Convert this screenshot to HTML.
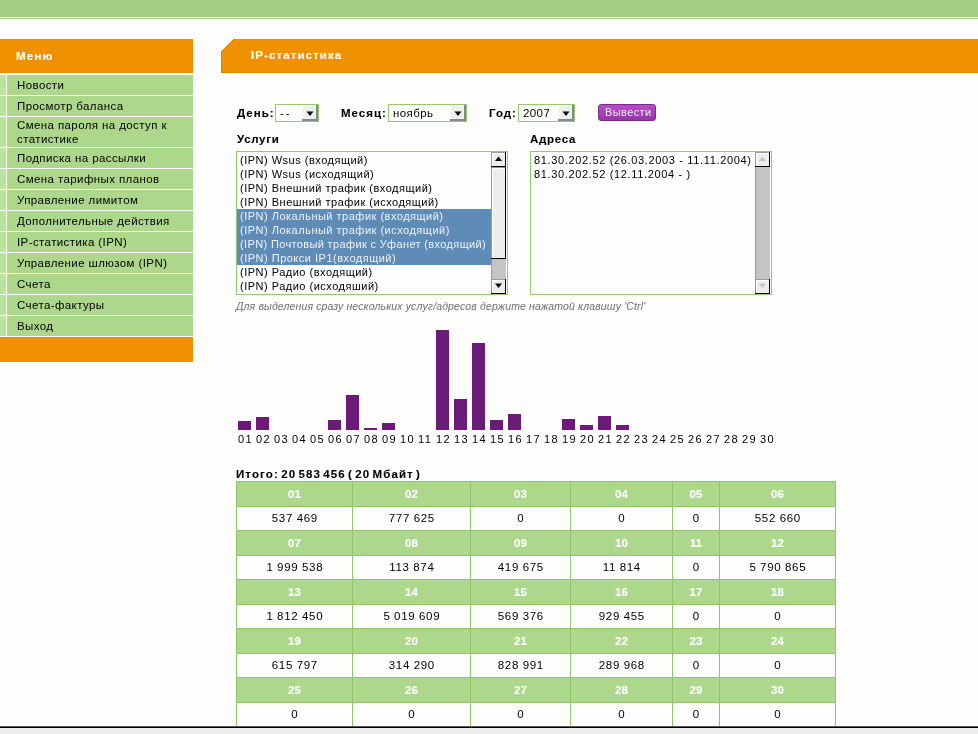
<!DOCTYPE html><html><head><meta charset="utf-8"><style>
*{margin:0;padding:0;box-sizing:border-box}
html,body{width:978px;height:734px;overflow:hidden;background:#fdfdfb;font-family:"Liberation Sans",sans-serif;color:#000}
div{position:absolute}
.t{white-space:nowrap;font-size:11px;line-height:14px;will-change:transform}
.b{font-weight:bold}
</style></head><body>
<div style="left:0;top:0;width:978px;height:17px;background:#a6ce84"></div>
<div style="left:0;top:17px;width:978px;height:1px;background:#fafcf6"></div>
<div style="left:0;top:18px;width:978px;height:1px;background:#a6ce84"></div>
<div style="left:0;top:39px;width:193px;height:34px;background:#f09200"></div>
<div style="left:0;top:72px;width:193px;height:1px;background:#ee8b00"></div>
<div style="left:192px;top:39px;width:1px;height:34px;background:#ee8b00"></div>
<div class="t b" style="left:16px;top:49px;color:#fff;font-size:11.5px;letter-spacing:1.2px;-webkit-text-stroke:0.15px #fff">Меню</div>
<div style="left:0;top:73px;width:193px;height:264px;background:#fff"></div>
<div style="left:0;top:75px;width:6px;height:20px;background:#b9e398"></div>
<div style="left:7px;top:75px;width:186px;height:20px;background:#add88c"></div>
<div class="t" style="left:17px;top:78px;letter-spacing:0.4px;line-height:14px;font-size:11.5px">Новости</div>
<div style="left:0;top:96px;width:6px;height:20px;background:#b9e398"></div>
<div style="left:7px;top:96px;width:186px;height:20px;background:#add88c"></div>
<div class="t" style="left:17px;top:99px;letter-spacing:0.4px;line-height:14px;font-size:11.5px">Просмотр баланса</div>
<div style="left:0;top:117px;width:6px;height:30px;background:#b9e398"></div>
<div style="left:7px;top:117px;width:186px;height:30px;background:#add88c"></div>
<div class="t" style="left:17px;top:118px;letter-spacing:0.4px;line-height:14px;font-size:11.5px">Смена пароля на доступ к<br>статистике</div>
<div style="left:0;top:148px;width:6px;height:20px;background:#b9e398"></div>
<div style="left:7px;top:148px;width:186px;height:20px;background:#add88c"></div>
<div class="t" style="left:17px;top:151px;letter-spacing:0.4px;line-height:14px;font-size:11.5px">Подписка на рассылки</div>
<div style="left:0;top:169px;width:6px;height:20px;background:#b9e398"></div>
<div style="left:7px;top:169px;width:186px;height:20px;background:#add88c"></div>
<div class="t" style="left:17px;top:172px;letter-spacing:0.4px;line-height:14px;font-size:11.5px">Смена тарифных планов</div>
<div style="left:0;top:190px;width:6px;height:20px;background:#b9e398"></div>
<div style="left:7px;top:190px;width:186px;height:20px;background:#add88c"></div>
<div class="t" style="left:17px;top:193px;letter-spacing:0.4px;line-height:14px;font-size:11.5px">Управление лимитом</div>
<div style="left:0;top:211px;width:6px;height:20px;background:#b9e398"></div>
<div style="left:7px;top:211px;width:186px;height:20px;background:#add88c"></div>
<div class="t" style="left:17px;top:214px;letter-spacing:0.4px;line-height:14px;font-size:11.5px">Дополнительные действия</div>
<div style="left:0;top:232px;width:6px;height:20px;background:#b9e398"></div>
<div style="left:7px;top:232px;width:186px;height:20px;background:#add88c"></div>
<div class="t" style="left:17px;top:235px;letter-spacing:0.4px;line-height:14px;font-size:11.5px">IP-статистика (IPN)</div>
<div style="left:0;top:253px;width:6px;height:20px;background:#b9e398"></div>
<div style="left:7px;top:253px;width:186px;height:20px;background:#add88c"></div>
<div class="t" style="left:17px;top:256px;letter-spacing:0.4px;line-height:14px;font-size:11.5px">Управление шлюзом (IPN)</div>
<div style="left:0;top:274px;width:6px;height:20px;background:#b9e398"></div>
<div style="left:7px;top:274px;width:186px;height:20px;background:#add88c"></div>
<div class="t" style="left:17px;top:277px;letter-spacing:0.4px;line-height:14px;font-size:11.5px">Счета</div>
<div style="left:0;top:295px;width:6px;height:20px;background:#b9e398"></div>
<div style="left:7px;top:295px;width:186px;height:20px;background:#add88c"></div>
<div class="t" style="left:17px;top:298px;letter-spacing:0.4px;line-height:14px;font-size:11.5px">Счета-фактуры</div>
<div style="left:0;top:316px;width:6px;height:20px;background:#b9e398"></div>
<div style="left:7px;top:316px;width:186px;height:20px;background:#add88c"></div>
<div class="t" style="left:17px;top:319px;letter-spacing:0.4px;line-height:14px;font-size:11.5px">Выход</div>
<div style="left:0;top:337px;width:193px;height:25px;background:#f09200"></div>
<svg style="position:absolute;left:221px;top:39px" width="757" height="34" shape-rendering="crispEdges"><rect x="1" y="12" width="756" height="1" fill="#f09200"/><rect x="0" y="12" width="1" height="1" fill="#cf8509"/><rect x="2" y="11" width="755" height="1" fill="#f09200"/><rect x="1" y="11" width="1" height="1" fill="#cf8509"/><rect x="3" y="10" width="754" height="1" fill="#f09200"/><rect x="2" y="10" width="1" height="1" fill="#cf8509"/><rect x="4" y="9" width="753" height="1" fill="#f09200"/><rect x="3" y="9" width="1" height="1" fill="#cf8509"/><rect x="5" y="8" width="752" height="1" fill="#f09200"/><rect x="4" y="8" width="1" height="1" fill="#cf8509"/><rect x="6" y="7" width="751" height="1" fill="#f09200"/><rect x="5" y="7" width="1" height="1" fill="#cf8509"/><rect x="7" y="6" width="750" height="1" fill="#f09200"/><rect x="6" y="6" width="1" height="1" fill="#cf8509"/><rect x="8" y="5" width="749" height="1" fill="#f09200"/><rect x="7" y="5" width="1" height="1" fill="#cf8509"/><rect x="9" y="4" width="748" height="1" fill="#f09200"/><rect x="8" y="4" width="1" height="1" fill="#cf8509"/><rect x="10" y="3" width="747" height="1" fill="#f09200"/><rect x="9" y="3" width="1" height="1" fill="#cf8509"/><rect x="11" y="2" width="746" height="1" fill="#f09200"/><rect x="10" y="2" width="1" height="1" fill="#cf8509"/><rect x="12" y="1" width="745" height="1" fill="#f09200"/><rect x="11" y="1" width="1" height="1" fill="#cf8509"/><rect x="13" y="0" width="744" height="1" fill="#f09200"/><rect x="12" y="0" width="1" height="1" fill="#cf8509"/><rect x="1" y="13" width="756" height="20" fill="#f09200"/><rect x="0" y="13" width="1" height="21" fill="#d8870a"/><rect x="1" y="33" width="756" height="1" fill="#e98300"/></svg>
<div class="t b" style="left:251px;top:48px;color:#fff;font-size:11.5px;letter-spacing:1.1px;-webkit-text-stroke:0.15px #fff">IP-статистика</div>
<div class="t b" style="left:237px;top:106px;font-size:11.5px;letter-spacing:1.0px;-webkit-text-stroke:0.1px #000;">День:</div>
<div class="t b" style="left:341px;top:106px;font-size:11.5px;letter-spacing:1.0px;-webkit-text-stroke:0.1px #000;">Месяц:</div>
<div class="t b" style="left:489px;top:106px;font-size:11.5px;letter-spacing:1.0px;-webkit-text-stroke:0.1px #000;">Год:</div>
<div style="left:275px;top:104px;width:44px;height:18px;border:1px solid #94c872;background:#fdfdfb"></div>
<div class="t" style="left:280px;top:106px;font-size:11.5px;letter-spacing:2px">--</div>
<div style="left:302px;top:105px;width:16px;height:16px;background:#888"></div>
<div style="left:302px;top:105px;width:14px;height:14px;background:#fff"></div>
<div style="left:303px;top:106px;width:13px;height:13px;background:#eceeeb"></div>
<svg style="position:absolute;left:306px;top:111px" width="8" height="6"><polygon points="0.5,0.5 7.5,0.5 4,5" fill="#000"/></svg>
<div style="left:388px;top:104px;width:79px;height:18px;border:1px solid #94c872;background:#fdfdfb"></div>
<div class="t" style="left:393px;top:106px;font-size:11.5px;letter-spacing:0.4px">ноябрь</div>
<div style="left:450px;top:105px;width:16px;height:16px;background:#888"></div>
<div style="left:450px;top:105px;width:14px;height:14px;background:#fff"></div>
<div style="left:451px;top:106px;width:13px;height:13px;background:#eceeeb"></div>
<svg style="position:absolute;left:454px;top:111px" width="8" height="6"><polygon points="0.5,0.5 7.5,0.5 4,5" fill="#000"/></svg>
<div style="left:518px;top:104px;width:57px;height:18px;border:1px solid #94c872;background:#fdfdfb"></div>
<div class="t" style="left:523px;top:106px;font-size:11.5px;letter-spacing:0.4px">2007</div>
<div style="left:558px;top:105px;width:16px;height:16px;background:#888"></div>
<div style="left:558px;top:105px;width:14px;height:14px;background:#fff"></div>
<div style="left:559px;top:106px;width:13px;height:13px;background:#eceeeb"></div>
<svg style="position:absolute;left:562px;top:111px" width="8" height="6"><polygon points="0.5,0.5 7.5,0.5 4,5" fill="#000"/></svg>
<div style="left:598px;top:104px;width:58px;height:17px;border:1px solid #7b2a8a;border-radius:3px;background:linear-gradient(#b54ec4,#9736a8)"></div>
<div class="t" style="left:605px;top:105px;color:#f4e8f6;letter-spacing:0.4px">Вывести</div>
<div class="t b" style="left:237px;top:132px;font-size:11.5px;letter-spacing:1.0px;-webkit-text-stroke:0.1px #000;letter-spacing:0.7px">Услуги</div>
<div class="t b" style="left:530px;top:132px;font-size:11.5px;letter-spacing:1.0px;-webkit-text-stroke:0.1px #000;letter-spacing:0.7px">Адреса</div>
<div style="left:236px;top:151px;width:272px;height:144px;border:1px solid #94c872;background:#fdfdfb"></div>
<div class="t" style="left:240px;top:153px;width:250px;overflow:hidden;color:#000;letter-spacing:0.5px">(IPN) Wsus (входящий)</div>
<div class="t" style="left:240px;top:167px;width:250px;overflow:hidden;color:#000;letter-spacing:0.5px">(IPN) Wsus (исходящий)</div>
<div class="t" style="left:240px;top:181px;width:250px;overflow:hidden;color:#000;letter-spacing:0.5px">(IPN) Внешний трафик (входящий)</div>
<div class="t" style="left:240px;top:195px;width:250px;overflow:hidden;color:#000;letter-spacing:0.5px">(IPN) Внешний трафик (исходящий)</div>
<div style="left:237px;top:209px;width:254px;height:14px;background:#5f8bb7"></div>
<div class="t" style="left:240px;top:209px;width:250px;overflow:hidden;color:#eef2f7;letter-spacing:0.5px">(IPN) Локальный трафик (входящий)</div>
<div style="left:237px;top:223px;width:254px;height:14px;background:#5f8bb7"></div>
<div class="t" style="left:240px;top:223px;width:250px;overflow:hidden;color:#eef2f7;letter-spacing:0.5px">(IPN) Локальный трафик (исходящий)</div>
<div style="left:237px;top:237px;width:254px;height:14px;background:#5f8bb7"></div>
<div class="t" style="left:240px;top:237px;width:250px;overflow:hidden;color:#eef2f7;letter-spacing:0.36px">(IPN) Почтовый трафик с Уфанет (входящий)</div>
<div style="left:237px;top:251px;width:254px;height:14px;background:#5f8bb7"></div>
<div class="t" style="left:240px;top:251px;width:250px;overflow:hidden;color:#eef2f7;letter-spacing:0.5px">(IPN) Прокси IP1(входящий)</div>
<div class="t" style="left:240px;top:265px;width:250px;overflow:hidden;color:#000;letter-spacing:0.5px">(IPN) Радио (входящий)</div>
<div class="t" style="left:240px;top:279px;width:250px;overflow:hidden;color:#000;letter-spacing:0.5px">(IPN) Радио (исходяший)</div>
<div style="left:491px;top:152px;width:15px;height:142px;background:#c4c5c2"></div>
<div style="left:491px;top:152px;width:1px;height:142px;background:#9a9a9a"></div>
<div style="left:491px;top:152px;width:15px;height:15px;background:#000"></div>
<div style="left:491px;top:152px;width:14px;height:14px;background:#9a9a9a"></div>
<div style="left:492px;top:153px;width:13px;height:13px;background:#fff"></div>
<div style="left:493px;top:154px;width:12px;height:12px;background:#eceeeb"></div>
<div style="left:491px;top:279px;width:15px;height:15px;background:#000"></div>
<div style="left:491px;top:279px;width:14px;height:14px;background:#9a9a9a"></div>
<div style="left:492px;top:280px;width:13px;height:13px;background:#fff"></div>
<div style="left:493px;top:281px;width:12px;height:12px;background:#eceeeb"></div>
<svg style="position:absolute;left:494px;top:156px" width="9" height="6"><polygon points="4.5,0.5 8,5 1,5" fill="#000"/></svg>
<svg style="position:absolute;left:494px;top:283px" width="9" height="6"><polygon points="1,0.5 8,0.5 4.5,5" fill="#000"/></svg>
<div style="left:491px;top:167px;width:15px;height:92px;background:#000"></div>
<div style="left:491px;top:167px;width:14px;height:91px;background:#9a9a9a"></div>
<div style="left:492px;top:168px;width:13px;height:90px;background:#fff"></div>
<div style="left:493px;top:169px;width:12px;height:89px;background:#eceeeb"></div>
<div style="left:530px;top:151px;width:242px;height:144px;border:1px solid #94c872;background:#fdfdfb"></div>
<div class="t" style="left:534px;top:153px;letter-spacing:0.65px">81.30.202.52 (26.03.2003 - 11.11.2004)</div>
<div class="t" style="left:534px;top:167px;letter-spacing:0.65px">81.30.202.52 (12.11.2004 - )</div>
<div style="left:755px;top:152px;width:15px;height:142px;background:#c4c5c2"></div>
<div style="left:755px;top:152px;width:1px;height:142px;background:#9a9a9a"></div>
<div style="left:755px;top:152px;width:15px;height:15px;background:#000"></div>
<div style="left:755px;top:152px;width:14px;height:14px;background:#9a9a9a"></div>
<div style="left:756px;top:153px;width:13px;height:13px;background:#fff"></div>
<div style="left:757px;top:154px;width:12px;height:12px;background:#eceeeb"></div>
<div style="left:755px;top:279px;width:15px;height:15px;background:#000"></div>
<div style="left:755px;top:279px;width:14px;height:14px;background:#9a9a9a"></div>
<div style="left:756px;top:280px;width:13px;height:13px;background:#fff"></div>
<div style="left:757px;top:281px;width:12px;height:12px;background:#eceeeb"></div>
<svg style="position:absolute;left:758px;top:156px" width="9" height="6"><polygon points="4.5,0.5 8,5 1,5" fill="#c2c2c2"/></svg>
<svg style="position:absolute;left:758px;top:283px" width="9" height="6"><polygon points="1,0.5 8,0.5 4.5,5" fill="#c2c2c2"/></svg>
<div class="t" style="left:236px;top:299px;font-style:italic;color:#6f6f6f;font-size:10.5px;letter-spacing:0.14px">Для выделения сразу нескольких услуг/адресов держите нажатой клавишу 'Ctrl'</div>
<div style="left:238px;top:421px;width:13px;height:9px;background:#6b1b77"></div>
<div class="t" style="left:238px;top:432px;width:14px;letter-spacing:1.5px">01</div>
<div style="left:256px;top:417px;width:13px;height:13px;background:#6b1b77"></div>
<div class="t" style="left:256px;top:432px;width:14px;letter-spacing:1.5px">02</div>
<div class="t" style="left:274px;top:432px;width:14px;letter-spacing:1.5px">03</div>
<div class="t" style="left:292px;top:432px;width:14px;letter-spacing:1.5px">04</div>
<div class="t" style="left:310px;top:432px;width:14px;letter-spacing:1.5px">05</div>
<div style="left:328px;top:420px;width:13px;height:10px;background:#6b1b77"></div>
<div class="t" style="left:328px;top:432px;width:14px;letter-spacing:1.5px">06</div>
<div style="left:346px;top:395px;width:13px;height:35px;background:#6b1b77"></div>
<div class="t" style="left:346px;top:432px;width:14px;letter-spacing:1.5px">07</div>
<div style="left:364px;top:428px;width:13px;height:2px;background:#6b1b77"></div>
<div class="t" style="left:364px;top:432px;width:14px;letter-spacing:1.5px">08</div>
<div style="left:382px;top:423px;width:13px;height:7px;background:#6b1b77"></div>
<div class="t" style="left:382px;top:432px;width:14px;letter-spacing:1.5px">09</div>
<div class="t" style="left:400px;top:432px;width:14px;letter-spacing:1.5px">10</div>
<div class="t" style="left:418px;top:432px;width:14px;letter-spacing:1.5px">11</div>
<div style="left:436px;top:330px;width:13px;height:100px;background:#6b1b77"></div>
<div class="t" style="left:436px;top:432px;width:14px;letter-spacing:1.5px">12</div>
<div style="left:454px;top:399px;width:13px;height:31px;background:#6b1b77"></div>
<div class="t" style="left:454px;top:432px;width:14px;letter-spacing:1.5px">13</div>
<div style="left:472px;top:343px;width:13px;height:87px;background:#6b1b77"></div>
<div class="t" style="left:472px;top:432px;width:14px;letter-spacing:1.5px">14</div>
<div style="left:490px;top:420px;width:13px;height:10px;background:#6b1b77"></div>
<div class="t" style="left:490px;top:432px;width:14px;letter-spacing:1.5px">15</div>
<div style="left:508px;top:414px;width:13px;height:16px;background:#6b1b77"></div>
<div class="t" style="left:508px;top:432px;width:14px;letter-spacing:1.5px">16</div>
<div class="t" style="left:526px;top:432px;width:14px;letter-spacing:1.5px">17</div>
<div class="t" style="left:544px;top:432px;width:14px;letter-spacing:1.5px">18</div>
<div style="left:562px;top:419px;width:13px;height:11px;background:#6b1b77"></div>
<div class="t" style="left:562px;top:432px;width:14px;letter-spacing:1.5px">19</div>
<div style="left:580px;top:425px;width:13px;height:5px;background:#6b1b77"></div>
<div class="t" style="left:580px;top:432px;width:14px;letter-spacing:1.5px">20</div>
<div style="left:598px;top:416px;width:13px;height:14px;background:#6b1b77"></div>
<div class="t" style="left:598px;top:432px;width:14px;letter-spacing:1.5px">21</div>
<div style="left:616px;top:425px;width:13px;height:5px;background:#6b1b77"></div>
<div class="t" style="left:616px;top:432px;width:14px;letter-spacing:1.5px">22</div>
<div class="t" style="left:634px;top:432px;width:14px;letter-spacing:1.5px">23</div>
<div class="t" style="left:652px;top:432px;width:14px;letter-spacing:1.5px">24</div>
<div class="t" style="left:670px;top:432px;width:14px;letter-spacing:1.5px">25</div>
<div class="t" style="left:688px;top:432px;width:14px;letter-spacing:1.5px">26</div>
<div class="t" style="left:706px;top:432px;width:14px;letter-spacing:1.5px">27</div>
<div class="t" style="left:724px;top:432px;width:14px;letter-spacing:1.5px">28</div>
<div class="t" style="left:742px;top:432px;width:14px;letter-spacing:1.5px">29</div>
<div class="t" style="left:760px;top:432px;width:14px;letter-spacing:1.5px">30</div>
<div class="t b" style="left:236px;top:467px;font-size:11.5px;letter-spacing:1.1px;word-spacing:-2px;-webkit-text-stroke:0.1px #000">Итого: 20 583 456 ( 20 Мбайт )</div>
<div style="left:236px;top:481px;width:600px;height:260px;background:#8fc46c"></div>
<div style="left:237px;top:482px;width:115px;height:24px;background:#add88c"></div>
<div style="left:237px;top:507px;width:115px;height:23px;background:#fdfdfb"></div>
<div style="left:353px;top:482px;width:117px;height:24px;background:#add88c"></div>
<div style="left:353px;top:507px;width:117px;height:23px;background:#fdfdfb"></div>
<div style="left:471px;top:482px;width:99px;height:24px;background:#add88c"></div>
<div style="left:471px;top:507px;width:99px;height:23px;background:#fdfdfb"></div>
<div style="left:571px;top:482px;width:101px;height:24px;background:#add88c"></div>
<div style="left:571px;top:507px;width:101px;height:23px;background:#fdfdfb"></div>
<div style="left:673px;top:482px;width:46px;height:24px;background:#add88c"></div>
<div style="left:673px;top:507px;width:46px;height:23px;background:#fdfdfb"></div>
<div style="left:720px;top:482px;width:115px;height:24px;background:#add88c"></div>
<div style="left:720px;top:507px;width:115px;height:23px;background:#fdfdfb"></div>
<div style="left:237px;top:531px;width:115px;height:24px;background:#add88c"></div>
<div style="left:237px;top:556px;width:115px;height:23px;background:#fdfdfb"></div>
<div style="left:353px;top:531px;width:117px;height:24px;background:#add88c"></div>
<div style="left:353px;top:556px;width:117px;height:23px;background:#fdfdfb"></div>
<div style="left:471px;top:531px;width:99px;height:24px;background:#add88c"></div>
<div style="left:471px;top:556px;width:99px;height:23px;background:#fdfdfb"></div>
<div style="left:571px;top:531px;width:101px;height:24px;background:#add88c"></div>
<div style="left:571px;top:556px;width:101px;height:23px;background:#fdfdfb"></div>
<div style="left:673px;top:531px;width:46px;height:24px;background:#add88c"></div>
<div style="left:673px;top:556px;width:46px;height:23px;background:#fdfdfb"></div>
<div style="left:720px;top:531px;width:115px;height:24px;background:#add88c"></div>
<div style="left:720px;top:556px;width:115px;height:23px;background:#fdfdfb"></div>
<div style="left:237px;top:580px;width:115px;height:24px;background:#add88c"></div>
<div style="left:237px;top:605px;width:115px;height:23px;background:#fdfdfb"></div>
<div style="left:353px;top:580px;width:117px;height:24px;background:#add88c"></div>
<div style="left:353px;top:605px;width:117px;height:23px;background:#fdfdfb"></div>
<div style="left:471px;top:580px;width:99px;height:24px;background:#add88c"></div>
<div style="left:471px;top:605px;width:99px;height:23px;background:#fdfdfb"></div>
<div style="left:571px;top:580px;width:101px;height:24px;background:#add88c"></div>
<div style="left:571px;top:605px;width:101px;height:23px;background:#fdfdfb"></div>
<div style="left:673px;top:580px;width:46px;height:24px;background:#add88c"></div>
<div style="left:673px;top:605px;width:46px;height:23px;background:#fdfdfb"></div>
<div style="left:720px;top:580px;width:115px;height:24px;background:#add88c"></div>
<div style="left:720px;top:605px;width:115px;height:23px;background:#fdfdfb"></div>
<div style="left:237px;top:629px;width:115px;height:24px;background:#add88c"></div>
<div style="left:237px;top:654px;width:115px;height:23px;background:#fdfdfb"></div>
<div style="left:353px;top:629px;width:117px;height:24px;background:#add88c"></div>
<div style="left:353px;top:654px;width:117px;height:23px;background:#fdfdfb"></div>
<div style="left:471px;top:629px;width:99px;height:24px;background:#add88c"></div>
<div style="left:471px;top:654px;width:99px;height:23px;background:#fdfdfb"></div>
<div style="left:571px;top:629px;width:101px;height:24px;background:#add88c"></div>
<div style="left:571px;top:654px;width:101px;height:23px;background:#fdfdfb"></div>
<div style="left:673px;top:629px;width:46px;height:24px;background:#add88c"></div>
<div style="left:673px;top:654px;width:46px;height:23px;background:#fdfdfb"></div>
<div style="left:720px;top:629px;width:115px;height:24px;background:#add88c"></div>
<div style="left:720px;top:654px;width:115px;height:23px;background:#fdfdfb"></div>
<div style="left:237px;top:678px;width:115px;height:24px;background:#add88c"></div>
<div style="left:237px;top:703px;width:115px;height:23px;background:#fdfdfb"></div>
<div style="left:353px;top:678px;width:117px;height:24px;background:#add88c"></div>
<div style="left:353px;top:703px;width:117px;height:23px;background:#fdfdfb"></div>
<div style="left:471px;top:678px;width:99px;height:24px;background:#add88c"></div>
<div style="left:471px;top:703px;width:99px;height:23px;background:#fdfdfb"></div>
<div style="left:571px;top:678px;width:101px;height:24px;background:#add88c"></div>
<div style="left:571px;top:703px;width:101px;height:23px;background:#fdfdfb"></div>
<div style="left:673px;top:678px;width:46px;height:24px;background:#add88c"></div>
<div style="left:673px;top:703px;width:46px;height:23px;background:#fdfdfb"></div>
<div style="left:720px;top:678px;width:115px;height:24px;background:#add88c"></div>
<div style="left:720px;top:703px;width:115px;height:23px;background:#fdfdfb"></div>
<div class="t b" style="left:237px;top:487px;width:115px;text-align:center;color:#fff;font-size:11.5px;-webkit-text-stroke:0.1px #fff">01</div>
<div class="t" style="left:237px;top:511px;width:115px;text-align:center;font-size:11.5px;letter-spacing:0.7px;word-spacing:-0.3px;text-indent:0.7px">537 469</div>
<div class="t b" style="left:353px;top:487px;width:117px;text-align:center;color:#fff;font-size:11.5px;-webkit-text-stroke:0.1px #fff">02</div>
<div class="t" style="left:353px;top:511px;width:117px;text-align:center;font-size:11.5px;letter-spacing:0.7px;word-spacing:-0.3px;text-indent:0.7px">777 625</div>
<div class="t b" style="left:471px;top:487px;width:99px;text-align:center;color:#fff;font-size:11.5px;-webkit-text-stroke:0.1px #fff">03</div>
<div class="t" style="left:471px;top:511px;width:99px;text-align:center;font-size:11.5px;letter-spacing:0.7px;word-spacing:-0.3px;text-indent:0.7px">0</div>
<div class="t b" style="left:571px;top:487px;width:101px;text-align:center;color:#fff;font-size:11.5px;-webkit-text-stroke:0.1px #fff">04</div>
<div class="t" style="left:571px;top:511px;width:101px;text-align:center;font-size:11.5px;letter-spacing:0.7px;word-spacing:-0.3px;text-indent:0.7px">0</div>
<div class="t b" style="left:673px;top:487px;width:46px;text-align:center;color:#fff;font-size:11.5px;-webkit-text-stroke:0.1px #fff">05</div>
<div class="t" style="left:673px;top:511px;width:46px;text-align:center;font-size:11.5px;letter-spacing:0.7px;word-spacing:-0.3px;text-indent:0.7px">0</div>
<div class="t b" style="left:720px;top:487px;width:115px;text-align:center;color:#fff;font-size:11.5px;-webkit-text-stroke:0.1px #fff">06</div>
<div class="t" style="left:720px;top:511px;width:115px;text-align:center;font-size:11.5px;letter-spacing:0.7px;word-spacing:-0.3px;text-indent:0.7px">552 660</div>
<div class="t b" style="left:237px;top:536px;width:115px;text-align:center;color:#fff;font-size:11.5px;-webkit-text-stroke:0.1px #fff">07</div>
<div class="t" style="left:237px;top:560px;width:115px;text-align:center;font-size:11.5px;letter-spacing:0.7px;word-spacing:-0.3px;text-indent:0.7px">1 999 538</div>
<div class="t b" style="left:353px;top:536px;width:117px;text-align:center;color:#fff;font-size:11.5px;-webkit-text-stroke:0.1px #fff">08</div>
<div class="t" style="left:353px;top:560px;width:117px;text-align:center;font-size:11.5px;letter-spacing:0.7px;word-spacing:-0.3px;text-indent:0.7px">113 874</div>
<div class="t b" style="left:471px;top:536px;width:99px;text-align:center;color:#fff;font-size:11.5px;-webkit-text-stroke:0.1px #fff">09</div>
<div class="t" style="left:471px;top:560px;width:99px;text-align:center;font-size:11.5px;letter-spacing:0.7px;word-spacing:-0.3px;text-indent:0.7px">419 675</div>
<div class="t b" style="left:571px;top:536px;width:101px;text-align:center;color:#fff;font-size:11.5px;-webkit-text-stroke:0.1px #fff">10</div>
<div class="t" style="left:571px;top:560px;width:101px;text-align:center;font-size:11.5px;letter-spacing:0.7px;word-spacing:-0.3px;text-indent:0.7px">11 814</div>
<div class="t b" style="left:673px;top:536px;width:46px;text-align:center;color:#fff;font-size:11.5px;-webkit-text-stroke:0.1px #fff">11</div>
<div class="t" style="left:673px;top:560px;width:46px;text-align:center;font-size:11.5px;letter-spacing:0.7px;word-spacing:-0.3px;text-indent:0.7px">0</div>
<div class="t b" style="left:720px;top:536px;width:115px;text-align:center;color:#fff;font-size:11.5px;-webkit-text-stroke:0.1px #fff">12</div>
<div class="t" style="left:720px;top:560px;width:115px;text-align:center;font-size:11.5px;letter-spacing:0.7px;word-spacing:-0.3px;text-indent:0.7px">5 790 865</div>
<div class="t b" style="left:237px;top:585px;width:115px;text-align:center;color:#fff;font-size:11.5px;-webkit-text-stroke:0.1px #fff">13</div>
<div class="t" style="left:237px;top:609px;width:115px;text-align:center;font-size:11.5px;letter-spacing:0.7px;word-spacing:-0.3px;text-indent:0.7px">1 812 450</div>
<div class="t b" style="left:353px;top:585px;width:117px;text-align:center;color:#fff;font-size:11.5px;-webkit-text-stroke:0.1px #fff">14</div>
<div class="t" style="left:353px;top:609px;width:117px;text-align:center;font-size:11.5px;letter-spacing:0.7px;word-spacing:-0.3px;text-indent:0.7px">5 019 609</div>
<div class="t b" style="left:471px;top:585px;width:99px;text-align:center;color:#fff;font-size:11.5px;-webkit-text-stroke:0.1px #fff">15</div>
<div class="t" style="left:471px;top:609px;width:99px;text-align:center;font-size:11.5px;letter-spacing:0.7px;word-spacing:-0.3px;text-indent:0.7px">569 376</div>
<div class="t b" style="left:571px;top:585px;width:101px;text-align:center;color:#fff;font-size:11.5px;-webkit-text-stroke:0.1px #fff">16</div>
<div class="t" style="left:571px;top:609px;width:101px;text-align:center;font-size:11.5px;letter-spacing:0.7px;word-spacing:-0.3px;text-indent:0.7px">929 455</div>
<div class="t b" style="left:673px;top:585px;width:46px;text-align:center;color:#fff;font-size:11.5px;-webkit-text-stroke:0.1px #fff">17</div>
<div class="t" style="left:673px;top:609px;width:46px;text-align:center;font-size:11.5px;letter-spacing:0.7px;word-spacing:-0.3px;text-indent:0.7px">0</div>
<div class="t b" style="left:720px;top:585px;width:115px;text-align:center;color:#fff;font-size:11.5px;-webkit-text-stroke:0.1px #fff">18</div>
<div class="t" style="left:720px;top:609px;width:115px;text-align:center;font-size:11.5px;letter-spacing:0.7px;word-spacing:-0.3px;text-indent:0.7px">0</div>
<div class="t b" style="left:237px;top:634px;width:115px;text-align:center;color:#fff;font-size:11.5px;-webkit-text-stroke:0.1px #fff">19</div>
<div class="t" style="left:237px;top:658px;width:115px;text-align:center;font-size:11.5px;letter-spacing:0.7px;word-spacing:-0.3px;text-indent:0.7px">615 797</div>
<div class="t b" style="left:353px;top:634px;width:117px;text-align:center;color:#fff;font-size:11.5px;-webkit-text-stroke:0.1px #fff">20</div>
<div class="t" style="left:353px;top:658px;width:117px;text-align:center;font-size:11.5px;letter-spacing:0.7px;word-spacing:-0.3px;text-indent:0.7px">314 290</div>
<div class="t b" style="left:471px;top:634px;width:99px;text-align:center;color:#fff;font-size:11.5px;-webkit-text-stroke:0.1px #fff">21</div>
<div class="t" style="left:471px;top:658px;width:99px;text-align:center;font-size:11.5px;letter-spacing:0.7px;word-spacing:-0.3px;text-indent:0.7px">828 991</div>
<div class="t b" style="left:571px;top:634px;width:101px;text-align:center;color:#fff;font-size:11.5px;-webkit-text-stroke:0.1px #fff">22</div>
<div class="t" style="left:571px;top:658px;width:101px;text-align:center;font-size:11.5px;letter-spacing:0.7px;word-spacing:-0.3px;text-indent:0.7px">289 968</div>
<div class="t b" style="left:673px;top:634px;width:46px;text-align:center;color:#fff;font-size:11.5px;-webkit-text-stroke:0.1px #fff">23</div>
<div class="t" style="left:673px;top:658px;width:46px;text-align:center;font-size:11.5px;letter-spacing:0.7px;word-spacing:-0.3px;text-indent:0.7px">0</div>
<div class="t b" style="left:720px;top:634px;width:115px;text-align:center;color:#fff;font-size:11.5px;-webkit-text-stroke:0.1px #fff">24</div>
<div class="t" style="left:720px;top:658px;width:115px;text-align:center;font-size:11.5px;letter-spacing:0.7px;word-spacing:-0.3px;text-indent:0.7px">0</div>
<div class="t b" style="left:237px;top:683px;width:115px;text-align:center;color:#fff;font-size:11.5px;-webkit-text-stroke:0.1px #fff">25</div>
<div class="t" style="left:237px;top:707px;width:115px;text-align:center;font-size:11.5px;letter-spacing:0.7px;word-spacing:-0.3px;text-indent:0.7px">0</div>
<div class="t b" style="left:353px;top:683px;width:117px;text-align:center;color:#fff;font-size:11.5px;-webkit-text-stroke:0.1px #fff">26</div>
<div class="t" style="left:353px;top:707px;width:117px;text-align:center;font-size:11.5px;letter-spacing:0.7px;word-spacing:-0.3px;text-indent:0.7px">0</div>
<div class="t b" style="left:471px;top:683px;width:99px;text-align:center;color:#fff;font-size:11.5px;-webkit-text-stroke:0.1px #fff">27</div>
<div class="t" style="left:471px;top:707px;width:99px;text-align:center;font-size:11.5px;letter-spacing:0.7px;word-spacing:-0.3px;text-indent:0.7px">0</div>
<div class="t b" style="left:571px;top:683px;width:101px;text-align:center;color:#fff;font-size:11.5px;-webkit-text-stroke:0.1px #fff">28</div>
<div class="t" style="left:571px;top:707px;width:101px;text-align:center;font-size:11.5px;letter-spacing:0.7px;word-spacing:-0.3px;text-indent:0.7px">0</div>
<div class="t b" style="left:673px;top:683px;width:46px;text-align:center;color:#fff;font-size:11.5px;-webkit-text-stroke:0.1px #fff">29</div>
<div class="t" style="left:673px;top:707px;width:46px;text-align:center;font-size:11.5px;letter-spacing:0.7px;word-spacing:-0.3px;text-indent:0.7px">0</div>
<div class="t b" style="left:720px;top:683px;width:115px;text-align:center;color:#fff;font-size:11.5px;-webkit-text-stroke:0.1px #fff">30</div>
<div class="t" style="left:720px;top:707px;width:115px;text-align:center;font-size:11.5px;letter-spacing:0.7px;word-spacing:-0.3px;text-indent:0.7px">0</div>
<div style="left:0;top:726px;width:978px;height:1px;background:#555"></div>
<div style="left:0;top:727px;width:978px;height:1px;background:#000"></div>
<div style="left:0;top:728px;width:978px;height:6px;background:#ecedea"></div>
</body></html>
